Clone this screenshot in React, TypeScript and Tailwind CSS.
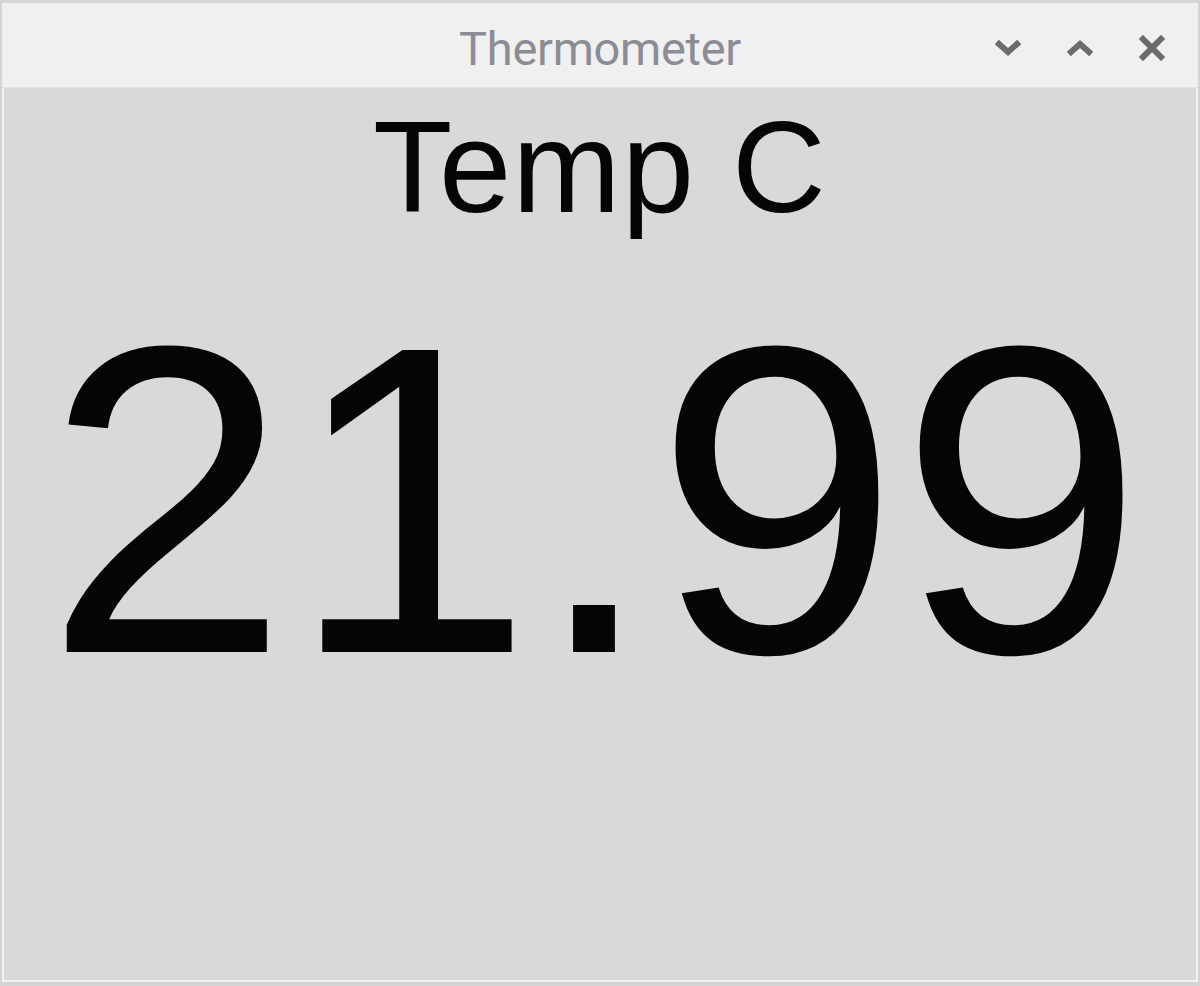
function ChevronDown() {
  return (
    <svg width="26" height="18" viewBox="0 0 26 18">
      <path d="M4 5 L13 13 L22 5" fill="none" stroke="#6b6b6d" strokeWidth="6" strokeLinecap="square" />
    </svg>
  );
}

function ChevronUp() {
  return (
    <svg width="26" height="18" viewBox="0 0 26 18">
      <path d="M4 13 L13 5 L22 13" fill="none" stroke="#6b6b6d" strokeWidth="6" strokeLinecap="square" />
    </svg>
  );
}

function CloseIcon() {
  return (
    <svg width="26" height="26" viewBox="0 0 26 26">
      <path d="M4 4 L22 22 M22 4 L4 22" fill="none" stroke="#6b6b6d" strokeWidth="6" strokeLinecap="square" />
    </svg>
  );
}

export default function App() {
  return (
    <div className="w-[1200px] h-[986px] bg-[#d4d4d4] flex flex-col overflow-hidden">
      <div className="flex flex-col flex-1 mt-[3px] mx-[2px] mb-[4px]">
        {/* title bar */}
        <div className="relative h-[85px] bg-[#f0f0f0] flex items-center justify-center shrink-0 border-b border-[#e2e2e2]">
          <span
            className="text-[47px] text-[#8c8c94] leading-none mt-[6px] tracking-[-0.3px]"
            style={{ fontFamily: "Roboto, 'Noto Sans', sans-serif" }}
          >
            Thermometer
          </span>
          <div className="absolute right-[33px] top-[32px] flex items-center gap-[46px]">
            <ChevronDown />
            <ChevronUp />
            <CloseIcon />
          </div>
        </div>

        {/* content */}
        <div
          className="flex-1 bg-[#d9d9d9] border-l-2 border-r-2 border-b-2 border-[#f4f4f4] flex flex-col items-center text-[#050505]"
          style={{ fontFamily: "'Liberation Sans', Arial, sans-serif" }}
        >
          <div className="text-[130px] leading-none mt-[14px] tracking-[1px]">Temp C</div>
          <div className="text-[439px] leading-none mt-[49px] mr-[12px]">21.99</div>
        </div>
      </div>
    </div>
  );
}
